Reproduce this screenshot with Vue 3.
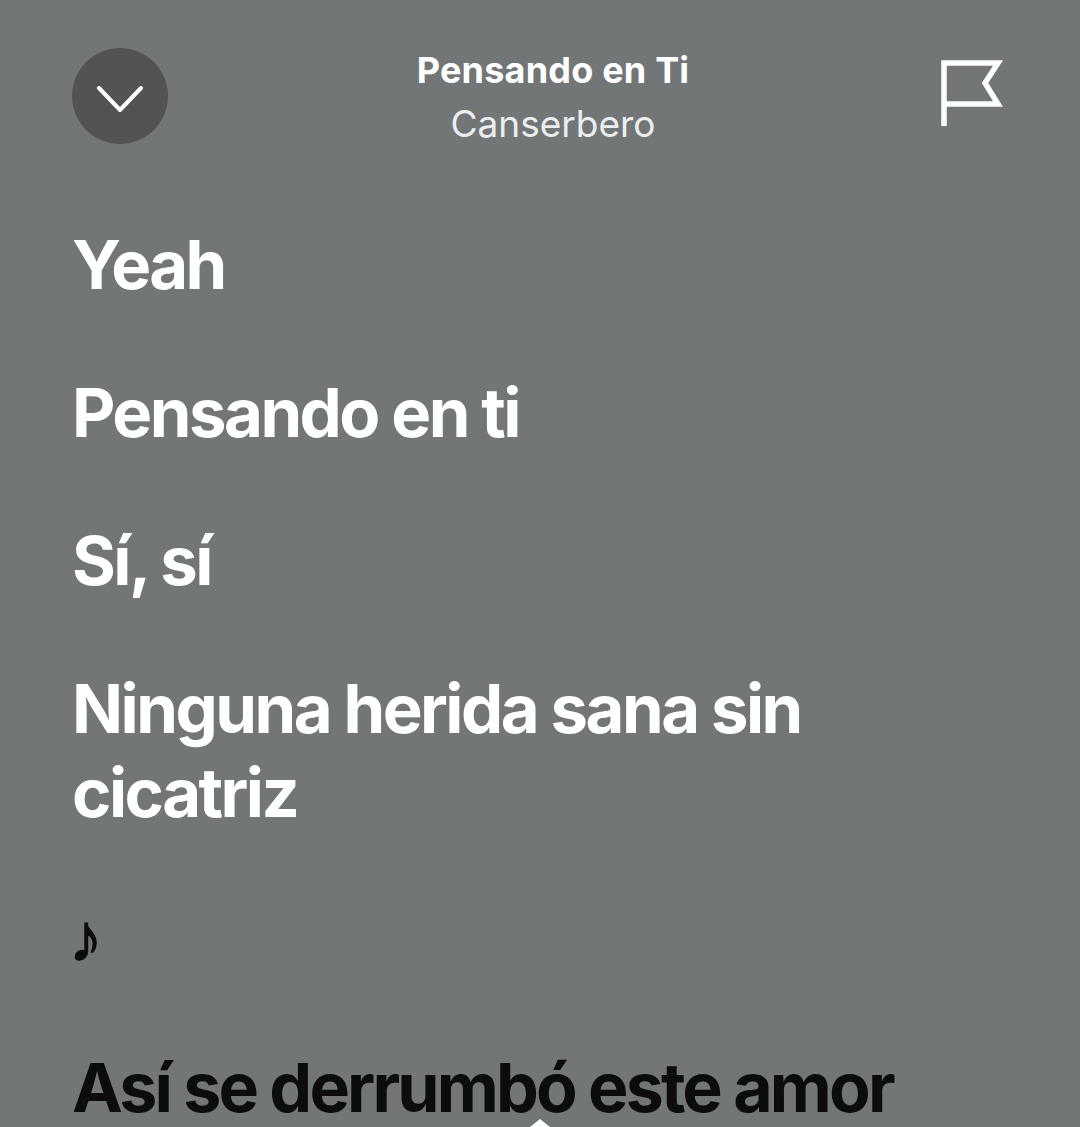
<template>
  <div class="screen">
    <header class="top-bar">
      <button class="close-btn" aria-label="Cerrar">
        <svg width="52" height="32" viewBox="0 0 52 32" fill="none">
          <path d="M5 8 L26 30 L47 8" stroke="#fff" stroke-width="4" stroke-linecap="round" stroke-linejoin="round" />
        </svg>
      </button>
      <div class="track">
        <div class="track-title">{{ title }}</div>
        <div class="track-artist">{{ artist }}</div>
      </div>
      <svg class="flag" width="66" height="70" viewBox="0 0 66 70" fill="none">
        <path d="M6 68 V5 H60 L47 25 L60 46 H6" stroke="#fff" stroke-width="5.5" />
      </svg>
    </header>

    <section class="lyrics">
      <p v-for="line in lines" :key="line.text" class="line" :class="line.kind">{{ line.text }}</p>
    </section>

    <span class="peek"></span>
  </div>
</template>

<script setup>
const title = 'Pensando en Ti'
const artist = 'Canserbero'

// las lineas ya cantadas van en blanco, la actual en negro
const lines = [
  { text: 'Yeah', kind: 'sung' },
  { text: 'Pensando en ti', kind: 'sung' },
  { text: 'Sí, sí', kind: 'sung' },
  { text: 'Ninguna herida sana sin cicatriz', kind: 'sung' },
  { text: '♪', kind: 'note' },
  { text: 'Así se derrumbó este amor', kind: 'current' }
]
</script>

<style>
html,
body {
  background: #727677;
}
</style>

<style scoped>
.screen {
  position: relative;
  height: 1127px;
  overflow: hidden;
  background: #727677;
  font-family: Inter, "Liberation Sans", sans-serif;
}

.top-bar {
  display: flex;
  align-items: flex-start;
  justify-content: space-between;
  padding: 48px 76px 0 72px;
}

.close-btn {
  display: flex;
  align-items: center;
  justify-content: center;
  width: 96px;
  height: 96px;
  padding: 0;
  border: 0;
  border-radius: 50%;
  background: #525453;
}

.track {
  width: 300px;
  text-align: center;
  color: #fff;
}

.track-title {
  font-size: 36px;
  line-height: 44px;
  font-weight: 700;
  letter-spacing: 0.2px;
}

.track-artist {
  margin-top: 10px;
  font-size: 37px;
  line-height: 44px;
  color: #eceeee;
}

.flag {
  margin-top: 10px;
}

.lyrics {
  padding: 77px 72px 0;
}

.line {
  margin: 0 0 64px;
  font-size: 67px;
  line-height: 84px;
  font-weight: 650;
  letter-spacing: -2.5px;
  color: #fff;
}

.note,
.current {
  color: #0c0c0c;
}

.note {
  margin: -4px 0 66px -3px;
  -webkit-text-stroke: 1.5px #0c0c0c;
}

.current {
  font-size: 68px;
  font-weight: 700;
  letter-spacing: -2.85px;
}

.peek {
  position: absolute;
  left: 530px;
  bottom: 0;
  border-left: 10px solid transparent;
  border-right: 10px solid transparent;
  border-bottom: 8px solid #fff;
}
</style>
